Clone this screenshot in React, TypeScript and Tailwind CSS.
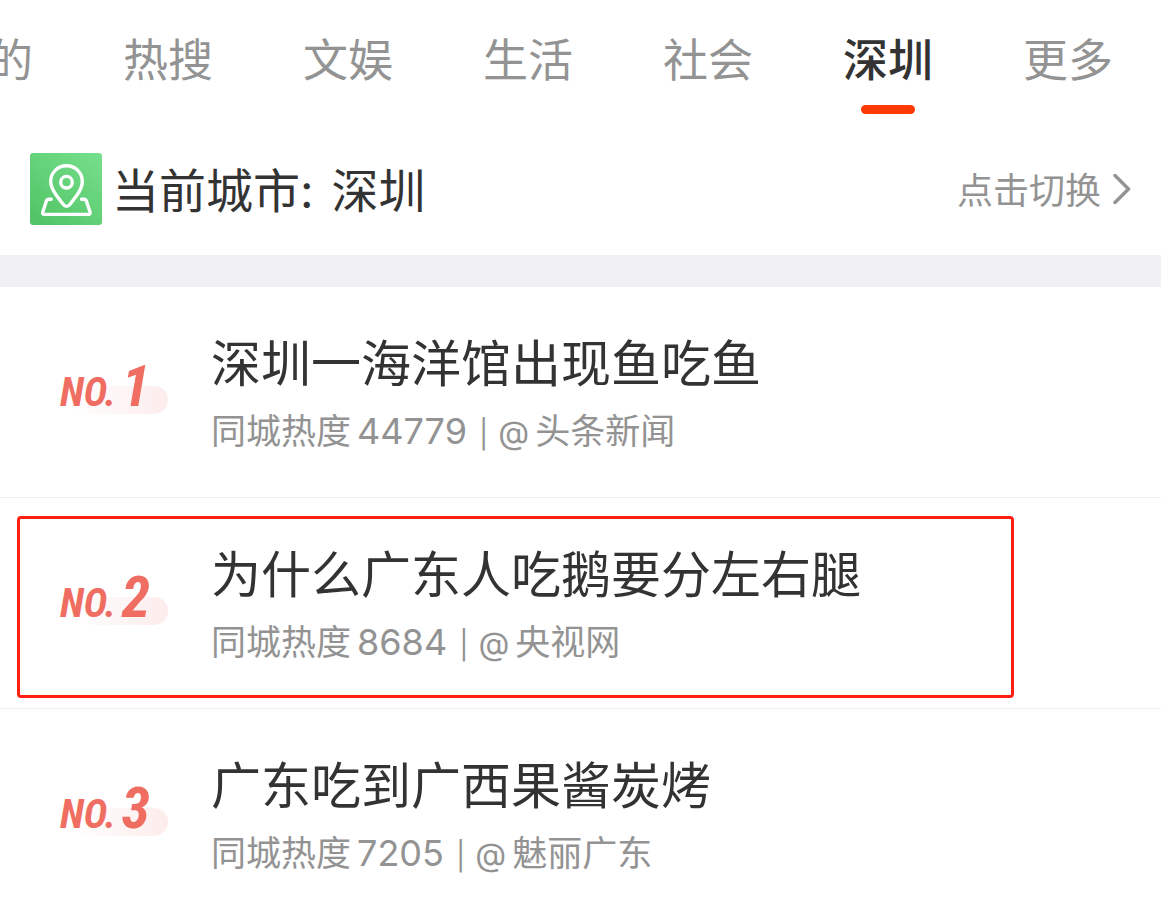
import { useState } from "react";
import clsx from "clsx";

interface HotTopic {
  rank: number;
  title: string;
  heat: number;
  author: string;
  highlighted?: boolean;
}

const TABS = ["的", "热搜", "文娱", "生活", "社会", "深圳", "更多"];

const TOPICS: HotTopic[] = [
  { rank: 1, title: "深圳一海洋馆出现鱼吃鱼", heat: 44779, author: "头条新闻" },
  { rank: 2, title: "为什么广东人吃鹅要分左右腿", heat: 8684, author: "央视网", highlighted: true },
  { rank: 3, title: "广东吃到广西果酱炭烤", heat: 7205, author: "魅丽广东" },
];

const CityIcon = () => (
  <svg viewBox="0 0 72 72" className="w-18 h-18 flex-shrink-0" fill="none" aria-hidden="true">
    <defs>
      <linearGradient id="city-green" x1="1" y1="0" x2="0.2" y2="1">
        <stop offset="0" stopColor="#76e08c" />
        <stop offset="1" stopColor="#53c568" />
      </linearGradient>
    </defs>
    <rect width="72" height="72" rx="3" fill="url(#city-green)" />
    <g stroke="#fff" strokeWidth="3.4" strokeLinecap="round" strokeLinejoin="round">
      <path d="M36.5 12.8C27.6 12.8 20.7 19.8 20.7 28.4c0 5.6 2.6 9.6 5.8 14l6.6 8.8c2.2 2.9 4.8 2.9 7 0l6.6-8.8c3.2-4.4 5.6-8.4 5.6-14 0-8.6-6.9-15.6-15.8-15.6Z" />
      <circle cx="36.5" cy="29.2" r="5.8" />
      <path d="M21.3 46.2h-2.6c-1.2 0-1.9.6-2.3 1.8l-3.6 11c-.5 1.5.1 2.4 1.6 2.4h44c1.5 0 2.1-.9 1.6-2.4l-3.6-11c-.4-1.2-1.1-1.8-2.3-1.8h-2.6" />
    </g>
  </svg>
);

const RankBadge = ({ rank }: { rank: number }) => (
  <div className="relative w-27 h-12 flex-shrink-0 mt-[30px]">
    <div className="absolute right-0 -bottom-1 w-24 h-7 rounded-full bg-linear-to-r from-[#fdeeee]/0 to-[#fdecec]" />
    <div className="relative flex items-baseline justify-between pr-[18px] font-['Liberation_Sans_Narrow','Roboto_Condensed',Roboto,sans-serif] font-bold italic leading-12 text-[#f06d62]">
      <span className="text-[40px]">NO.</span>
      <span className="text-[58px]">{rank}</span>
    </div>
  </div>
);

const TopicRow = ({ topic }: { topic: HotTopic }) => (
  <li className="relative flex pt-[45px] pb-[42px] px-15 border-b border-[#ededee]">
    <RankBadge rank={topic.rank} />
    <a href="#" className="ml-[43px] min-w-0">
      <h2 className="text-[50px] leading-16 text-[#333]">{topic.title}</h2>
      <p className="flex items-baseline h-12 mt-[11px] text-[35px] leading-12 text-[#939393]">
        <span>同城热度</span>
        <span className="ml-1.5 text-[36px]">{topic.heat}</span>
        <span className="ml-3 mr-2.5 text-[28px]">|</span>
        <span className="text-[32px]">@</span>
        <span className="ml-1.5">{topic.author}</span>
      </p>
    </a>
    {topic.highlighted && (
      <div className="absolute top-[18px] bottom-[10px] left-[17px] right-[147px] border-3 border-[#ff1e12] rounded-sm pointer-events-none" />
    )}
  </li>
);

export default function App() {
  const [activeTab, setActiveTab] = useState("深圳");

  return (
    <main className="min-h-screen overflow-hidden bg-white font-[Inter,'Noto_Sans_CJK_SC',sans-serif]">
      {/* Channel tabs */}
      <nav className="flex justify-between -ml-3 pr-12 pt-[29px] pb-[9px]">
        {TABS.map((tab) => (
          <button
            key={tab}
            onClick={() => setActiveTab(tab)}
            className={clsx(
              "flex flex-col items-center text-[45px] leading-16 whitespace-nowrap",
              tab === activeTab ? "font-medium text-[#333]" : "text-[#939393]"
            )}
          >
            {tab}
            {tab === activeTab && <span className="mt-3 w-[54px] h-[9px] rounded-full bg-[#ff3a00]" />}
          </button>
        ))}
      </nav>

      {/* Current city */}
      <section className="flex items-center h-33 px-[30px]">
        <CityIcon />
        <h1 className="flex gap-[18px] ml-[10px] pt-1 text-[47px] leading-16 text-[#333]">
          <span>当前城市:</span>
          <span>深圳</span>
        </h1>
        <button className="ml-auto flex items-center gap-3 text-[36px] leading-12 text-[#939393]">
          <span className="pt-1">点击切换</span>
          <svg viewBox="0 0 18 30" className="w-[18px] h-[30px]" fill="none" stroke="currentColor" strokeWidth="3.5" aria-hidden="true">
            <path d="M2 1.5 15.5 15 2 28.5" strokeLinecap="round" strokeLinejoin="round" />
          </svg>
        </button>
      </section>

      <div className="h-8 bg-[#f0f0f5]" />

      {/* Ranking */}
      <ol>
        {TOPICS.map((topic) => (
          <TopicRow key={topic.rank} topic={topic} />
        ))}
      </ol>
    </main>
  );
}
